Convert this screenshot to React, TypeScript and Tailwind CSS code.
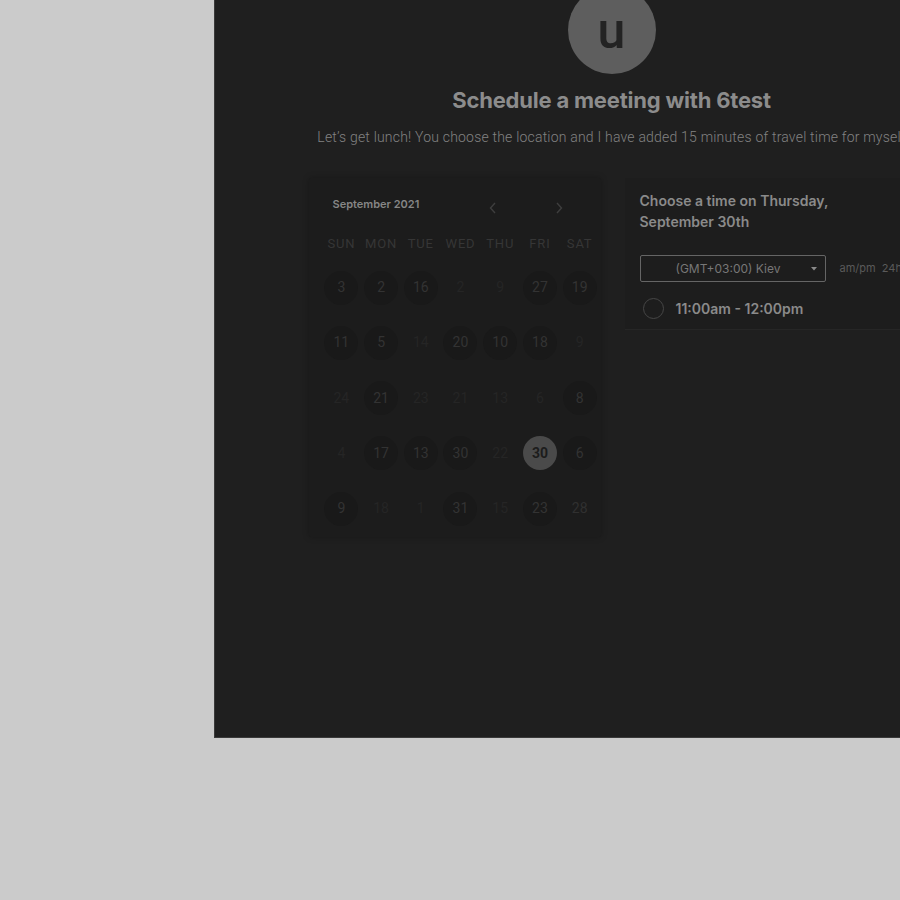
import React from "react";

type Cell = { n: number; kind: "c" | "f" | "s" | "m" };

const rows: Cell[][] = [
  [
    { n: 3, kind: "c" },
    { n: 2, kind: "c" },
    { n: 16, kind: "c" },
    { n: 2, kind: "f" },
    { n: 9, kind: "f" },
    { n: 27, kind: "c" },
    { n: 19, kind: "c" },
  ],
  [
    { n: 11, kind: "c" },
    { n: 5, kind: "c" },
    { n: 14, kind: "f" },
    { n: 20, kind: "c" },
    { n: 10, kind: "c" },
    { n: 18, kind: "c" },
    { n: 9, kind: "f" },
  ],
  [
    { n: 24, kind: "f" },
    { n: 21, kind: "c" },
    { n: 23, kind: "f" },
    { n: 21, kind: "f" },
    { n: 13, kind: "f" },
    { n: 6, kind: "f" },
    { n: 8, kind: "c" },
  ],
  [
    { n: 4, kind: "f" },
    { n: 17, kind: "c" },
    { n: 13, kind: "c" },
    { n: 30, kind: "c" },
    { n: 22, kind: "f" },
    { n: 30, kind: "s" },
    { n: 6, kind: "c" },
  ],
  [
    { n: 9, kind: "c" },
    { n: 18, kind: "f" },
    { n: 1, kind: "f" },
    { n: 31, kind: "c" },
    { n: 15, kind: "f" },
    { n: 23, kind: "c" },
    { n: 28, kind: "m" },
  ],
];

const days = ["SUN", "MON", "TUE", "WED", "THU", "FRI", "SAT"];

function DayCell({ c }: { c: Cell }) {
  if (c.kind === "s") {
    return (
      <div className="flex h-[34px] w-[34px] items-center justify-center rounded-full bg-[#4a4a4a] text-[14px] font-bold text-[#1c1c1c]">
        {c.n}
      </div>
    );
  }
  if (c.kind === "c") {
    return (
      <div className="flex h-[34px] w-[34px] items-center justify-center rounded-full bg-[#191919] text-[14px] text-[#333333]">
        {c.n}
      </div>
    );
  }
  if (c.kind === "m") {
    return (
      <div className="flex h-[34px] w-[34px] items-center justify-center text-[14px] text-[#303030]">
        {c.n}
      </div>
    );
  }
  return (
    <div className="flex h-[34px] w-[34px] items-center justify-center text-[14px] text-[#252525]">
      {c.n}
    </div>
  );
}

export default function App() {
  return (
    <div
      className="relative h-[900px] w-[900px] overflow-hidden bg-[#cbcbcb]"
      style={{ fontFamily: "Roboto, 'Liberation Sans', sans-serif" }}
    >
      <div className="ml-[214px] h-[738px] w-[794px] overflow-hidden border-b border-l border-[#3a3a3a] bg-[#1f1f1f]">
        <div className="flex flex-col items-center">
          <div className="-mt-[14px] flex h-[88px] w-[88px] items-center justify-center rounded-full bg-[#5e5e5e]">
            <span className="mt-[2px] text-[50px] font-medium leading-none text-[#232323]">u</span>
          </div>
          <h1
            className="mt-[12px] text-[22px] font-bold leading-[28px] tracking-[-0.2px] text-[#8c8c8c]"
            style={{ fontFamily: "Inter, 'Liberation Sans', sans-serif" }}
          >
            Schedule a meeting with 6test
          </h1>
          <p className="mt-[13px] whitespace-nowrap text-[14px] font-light leading-[20px] tracking-[0.2px] text-[#828282]">
            Let’s get lunch! You choose the location and I have added 15 minutes of travel time for myself
          </p>

          <div className="mt-[31px] flex gap-[24px]">
            {/* Calendar card */}
            <div className="h-[359px] w-[292px] rounded-[2px] bg-[#1c1c1c] shadow-[0_0_6px_rgba(0,0,0,0.25)]">
              <div className="relative h-[52px]">
                <span
                  className="absolute left-[24px] top-[19px] text-[11px] font-semibold leading-[14px] text-[#868686]"
                  style={{ fontFamily: "Inter, 'Liberation Sans', sans-serif" }}
                >
                  September 2021
                </span>
                <svg className="absolute left-[180px] top-[24px]" width="8" height="12" viewBox="0 0 8 12">
                  <path d="M6 1 L1.5 6 L6 11" stroke="#3e3e3e" strokeWidth="1.4" fill="none" />
                </svg>
                <svg className="absolute left-[246px] top-[24px]" width="8" height="12" viewBox="0 0 8 12">
                  <path d="M2 1 L6.5 6 L2 11" stroke="#3e3e3e" strokeWidth="1.4" fill="none" />
                </svg>
              </div>
              <div className="ml-[13px] grid w-[278px] grid-cols-7">
                {days.map((d) => (
                  <div
                    key={d}
                    className="flex h-[28px] items-center justify-center text-[13px] tracking-[0.8px] text-[#363636]"
                  >
                    {d}
                  </div>
                ))}
              </div>
              <div className="ml-[13px] mt-[2px] flex w-[278px] flex-col">
                {rows.map((r, i) => (
                  <div key={i} className="grid h-[55.25px] grid-cols-7 items-center">
                    {r.map((c, j) => (
                      <div key={j} className="flex items-center justify-center">
                        <DayCell c={c} />
                      </div>
                    ))}
                  </div>
                ))}
              </div>
            </div>

            {/* Time card */}
            <div
              className="h-[152px] w-[290px] border-b border-[#262626] bg-[#1d1d1d] pl-[15px] pt-[12px]"
              style={{ fontFamily: "Inter, 'Liberation Sans', sans-serif" }}
            >
              <div className="text-[14px] font-semibold leading-[21px] text-[#8a8a8a]">
                Choose a time on Thursday,
                <br />
                September 30th
              </div>
              <div className="mt-[23px] flex items-center">
                <div className="relative flex h-[27px] w-[186px] items-center rounded-[2px] border border-[#656565]">
                  <span className="ml-[35px] text-[12px] text-[#777777]">(GMT+03:00) Kiev</span>
                  <svg className="absolute right-[8px] top-[11px]" width="6" height="4" viewBox="0 0 6 4">
                    <path d="M0 0 L6 0 L3 3.5 Z" fill="#8a8a8a" />
                  </svg>
                </div>
                <span className="ml-[14px] whitespace-nowrap text-[11px] text-[#5a5a5a]">am/pm&nbsp;&nbsp;24h</span>
              </div>
              <div className="mt-[16px] flex items-center">
                <div className="ml-[3px] h-[21px] w-[21px] rounded-full border border-[#464646]" />
                <span className="ml-[12px] text-[14px] font-semibold text-[#8a8a8a]">11:00am - 12:00pm</span>
              </div>
            </div>
          </div>
        </div>
      </div>
    </div>
  );
}
